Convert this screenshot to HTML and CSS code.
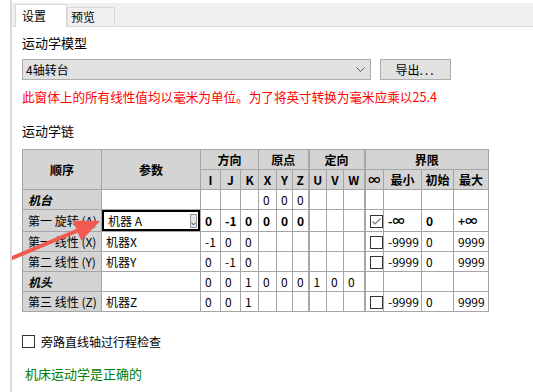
FILE: index.html
```html
<!DOCTYPE html>
<html lang="zh-CN">
<head>
  <meta charset="UTF-8">
  <title>运动学设置</title>
  <link rel="stylesheet" href="styles.css">
</head>
<body>
  <div class="window">
    <div class="tabs">
      <div class="tab active">设置</div>
      <div class="tab">预览</div>
    </div>

    <div class="page">
      <div class="label">运动学模型</div>
      <div class="model-row">
        <div class="select">
          <span>4轴转台</span>
          <svg width="9" height="6" viewBox="0 0 9 6"><polyline points="0.5,0.5 4.5,4.5 8.5,0.5" fill="none" stroke="#555" stroke-width="1"/></svg>
        </div>
        <div class="btn">导出<span class="dots">...</span></div>
      </div>
      <p class="warn">此窗体上的所有线性值均以毫米为单位。为了将英寸转换为毫米应乘以25.4</p>

      <div class="label chain-label">运动学链</div>
      <table class="chain">
        <colgroup>
          <col style="width:79px"><col style="width:99px">
          <col style="width:20px"><col style="width:20px"><col style="width:18px">
          <col style="width:18px"><col style="width:16px"><col style="width:16px">
          <col style="width:18px"><col style="width:17px"><col style="width:21px">
          <col style="width:19px"><col style="width:38px"><col style="width:32px"><col style="width:35px">
        </colgroup>
        <tr class="head1">
          <th rowspan="2">顺序</th>
          <th rowspan="2">参数</th>
          <th colspan="3">方向</th>
          <th colspan="3">原点</th>
          <th colspan="3" class="sep">定向</th>
          <th colspan="4" class="sep">界限</th>
        </tr>
        <tr class="head2">
          <th>I</th><th>J</th><th>K</th>
          <th>X</th><th>Y</th><th>Z</th>
          <th class="sep">U</th><th>V</th><th>W</th>
          <th class="sep">∞</th><th>最小</th><th>初始</th><th>最大</th>
        </tr>
        <tr>
          <td class="rowhead group">机台</td>
          <td></td>
          <td></td><td></td><td></td>
          <td>0</td><td>0</td><td>0</td>
          <td class="sep"></td><td></td><td></td>
          <td class="sep"></td><td></td><td></td><td></td>
        </tr>
        <tr class="current">
          <td class="rowhead">第一 旋转 (A)</td>
          <td class="edit"><div class="combo"><span>机器 A</span><span class="drop"><svg width="5" height="4" viewBox="0 0 5 4"><polyline points="0.5,0.5 2.5,3 4.5,0.5" fill="none" stroke="#444" stroke-width="1"/></svg></span></div></td>
          <td>0</td><td>-1</td><td>0</td>
          <td>0</td><td>0</td><td>0</td>
          <td class="sep"></td><td></td><td></td>
          <td class="sep"><span class="box checked"><svg width="11" height="11" viewBox="0 0 11 11"><polyline points="1.5,5.5 4,8 9.5,2.5" fill="none" stroke="#777" stroke-width="1.2"/></svg></span></td>
          <td>-∞</td><td>0</td><td>+∞</td>
        </tr>
        <tr>
          <td class="rowhead">第一 线性 (X)</td>
          <td>机器X</td>
          <td>-1</td><td>0</td><td>0</td>
          <td></td><td></td><td></td>
          <td class="sep"></td><td></td><td></td>
          <td class="sep"><span class="box"></span></td>
          <td>-9999</td><td>0</td><td>9999</td>
        </tr>
        <tr>
          <td class="rowhead">第二 线性 (Y)</td>
          <td>机器Y</td>
          <td>0</td><td>-1</td><td>0</td>
          <td></td><td></td><td></td>
          <td class="sep"></td><td></td><td></td>
          <td class="sep"><span class="box"></span></td>
          <td>-9999</td><td>0</td><td>9999</td>
        </tr>
        <tr>
          <td class="rowhead group">机头</td>
          <td></td>
          <td>0</td><td>0</td><td>1</td>
          <td>0</td><td>0</td><td>0</td>
          <td class="sep">1</td><td>0</td><td>0</td>
          <td class="sep"></td><td></td><td></td><td></td>
        </tr>
        <tr class="last">
          <td class="rowhead">第三 线性 (Z)</td>
          <td>机器Z</td>
          <td>0</td><td>0</td><td>1</td>
          <td></td><td></td><td></td>
          <td class="sep"></td><td></td><td></td>
          <td class="sep"><span class="box"></span></td>
          <td>-9999</td><td>0</td><td>9999</td>
        </tr>
      </table>

      <div class="check-row"><span class="box"></span>旁路直线轴过行程检查</div>
      <p class="ok">机床运动学是正确的</p>
    </div>

    <!-- annotation arrow drawn over the table -->
    <svg class="arrow" width="110" height="70" viewBox="0 200 110 70">
      <line x1="-2" y1="264" x2="80" y2="229.5" stroke="#f05a50" stroke-width="4"/>
      <polygon points="100,221 72.7,220.6 81.3,240.8" fill="#f05a50"/>
    </svg>
  </div>
</body>
</html>
```

FILE: styles.css
```css
body {
  margin: 0;
  background: #fff;
  font-family: "Noto Sans CJK SC", "Noto Sans", sans-serif;
  font-size: 12px;
  color: #000;
}

.window {
  position: relative;
  margin-left: 10px;
  height: 392px;
  border-left: 2px solid #dadada;
  overflow: hidden;
}

/* Tab strip */
.tabs {
  display: flex;
  align-items: flex-end;
  margin-top: 3px;
  height: 23px;
  padding-left: 3px;
  background: #f0f0f0;
  border-bottom: 1px solid #d9d9d9;
}

.tab {
  height: 18px;
  width: 43px;
  line-height: 18px;
  padding-left: 3px;
  border: 1px solid #d9d9d9;
  border-bottom: none;
  background: #f0f0f0;
}

.tab.active {
  height: 22px;
  width: 44px;
  line-height: 22px;
  padding-left: 6px;
  background: #fff;
  margin-bottom: -1px;
}

.page {
  padding-left: 10px;
}

.label {
  margin-top: 8px;
  line-height: 16px;
  font-size: 13px;
}

.chain-label {
  margin-top: 18px;
}

/* Model selector */
.model-row {
  display: flex;
  margin-top: 8px;
  height: 21px;
}

.select {
  width: 339px;
  height: 19px;
  border: 1px solid #adadad;
  background: #e1e1e1;
  display: flex;
  align-items: center;
  justify-content: space-between;
  padding: 0 5px 0 3px;
}

.btn {
  margin-left: 9px;
  width: 69px;
  height: 19px;
  line-height: 19px;
  border: 1px solid #adadad;
  background: #e1e1e1;
  text-align: center;
}

.dots {
  letter-spacing: 2px;
}

.warn {
  margin: 9px 0 0;
  line-height: 16px;
  font-size: 12.6px;
  color: #ff0000;
}

/* Kinematic chain table */
.chain {
  margin-top: 10px;
  border-collapse: collapse;
  table-layout: fixed;
  width: 467px;
  font-size: 12px;
}

.chain th,
.chain td {
  border: 1px solid #a5a5a5;
  padding: 0 0 0 4px;
  height: 19px;
  white-space: nowrap;
  overflow: hidden;
}

.chain th {
  background: #d4d4d4;
  font-weight: bold;
  text-align: center;
  padding: 0;
}

.chain .sep {
  border-left: 2px solid #a5a5a5;
}

.chain .rowhead {
  background: #d4d4d4;
  padding-left: 5px;
}

.chain .group {
  font-weight: bold;
  font-style: italic;
}

.chain .current td {
  font-weight: bold;
}

.chain .current .rowhead {
  font-weight: normal;
}

.chain td.edit {
  padding: 0;
  font-weight: normal;
}

.combo {
  height: 17px;
  border: 2px solid #000;
  display: flex;
  align-items: center;
  justify-content: space-between;
  padding-left: 4px;
}

.drop {
  width: 7px;
  height: 14px;
  margin-right: 1px;
  border: 1px solid #999;
  background: #e6e6e6;
  display: flex;
  align-items: flex-end;
  justify-content: center;
  padding-bottom: 1px;
  box-sizing: border-box;
}

.box {
  display: inline-block;
  width: 11px;
  height: 11px;
  border: 1px solid #333;
  background: #fff;
  vertical-align: middle;
  position: relative;
  top: -1px;
}

.box svg {
  display: block;
}

.check-row {
  margin-top: 22px;
  line-height: 16px;
  display: flex;
  align-items: center;
  gap: 6px;
}

.ok {
  margin: 16px 0 0 3px;
  line-height: 16px;
  font-size: 13px;
  color: #008000;
}

.arrow {
  position: absolute;
  left: -12px;
  top: 200px;
}
```
